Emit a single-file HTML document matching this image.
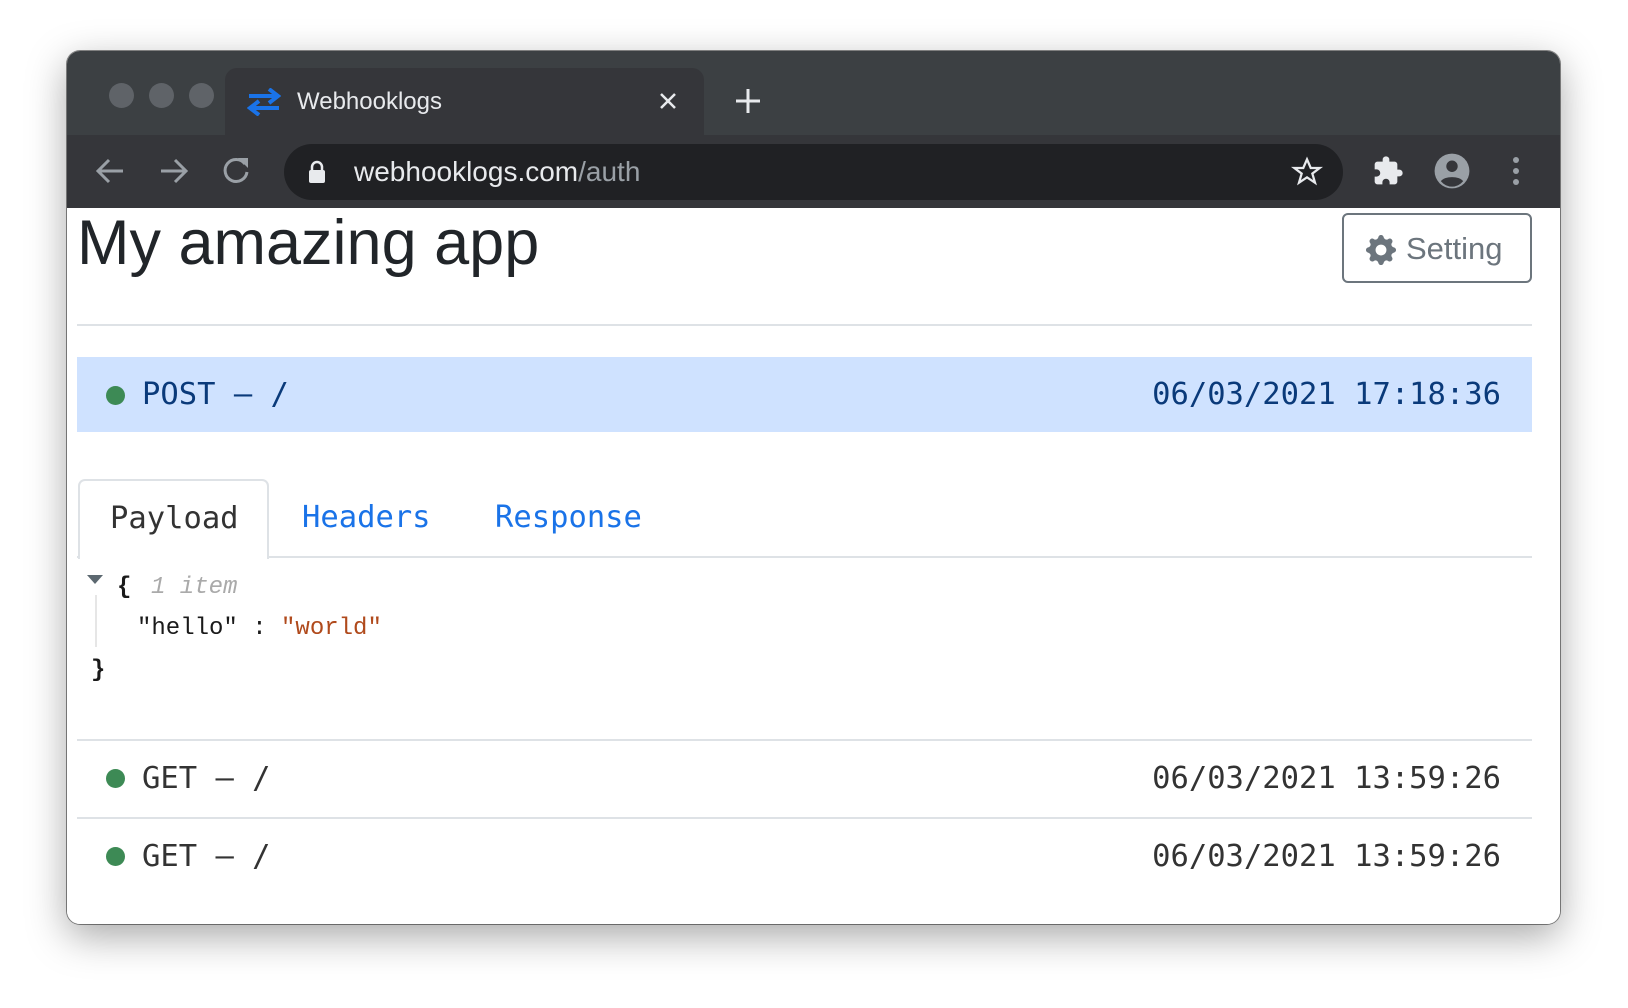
<!DOCTYPE html>
<html><head><meta charset="utf-8"><style>
*{margin:0;padding:0;box-sizing:border-box}
body{width:1628px;height:1008px;background:#fff;position:relative;overflow:hidden;font-family:"Liberation Sans",sans-serif}
.win{position:absolute;left:67px;top:51px;width:1493px;height:873px;border-radius:13px;background:#fff;overflow:hidden;box-shadow:0 12px 40px rgba(0,0,0,.35),0 0 0 1px rgba(0,0,0,.45)}
.tabbar{position:absolute;left:0;top:0;width:100%;height:84px;background:#3c4043}
.dot{position:absolute;top:32px;width:25px;height:25px;border-radius:50%;background:#5f6368}
.tab{position:absolute;left:158px;top:17px;width:479px;height:70px;background:#35363a;border-radius:12px 12px 0 0}
.tab .t{position:absolute;left:72px;top:20px;color:#e8eaed;font-size:24px}
.toolbar{position:absolute;left:0;top:84px;width:100%;height:73px;background:#35363a}
.omni{position:absolute;left:217px;top:9px;width:1059px;height:56px;border-radius:28px;background:#202124}
.omni .u{position:absolute;left:70px;top:12px;font-size:28px;color:#e8eaed}
.mono{font-family:"DejaVu Sans Mono",monospace}
.content{position:absolute;left:0;top:157px;width:100%;bottom:0;background:#fff}
</style></head><body>
<div class="win">
 <div class="tabbar">
  <div class="dot" style="left:42px"></div><div class="dot" style="left:82px"></div><div class="dot" style="left:122px"></div>
  <div class="tab">
   <svg style="position:absolute;left:22px;top:20px" width="34" height="28" viewBox="0 0 34 28"><path d="M2 8H30M22 1L31 8L22 15" stroke="#1a73e8" stroke-width="4" fill="none"/><path d="M32 20H4M12 13L3 20L12 27" stroke="#1a73e8" stroke-width="4" fill="none"/></svg>
   <div class="t">Webhooklogs</div>
   <svg style="position:absolute;left:434px;top:24px" width="18" height="18"><path d="M2 2L16 16M16 2L2 16" stroke="#e8eaed" stroke-width="2.5"/></svg>
  </div>
  <svg style="position:absolute;left:668px;top:37px" width="26" height="26"><path d="M13 1V25M1 13H25" stroke="#e8eaed" stroke-width="3"/></svg>
 </div>
 <div class="toolbar">
  <svg style="position:absolute;left:28px;top:22px" width="30" height="28"><path d="M28 14H3M14 3L3 14L14 25" stroke="#9aa0a6" stroke-width="3" fill="none"/></svg>
  <svg style="position:absolute;left:92px;top:22px" width="30" height="28"><path d="M2 14H27M16 3L27 14L16 25" stroke="#9aa0a6" stroke-width="3" fill="none"/></svg>
  <svg style="position:absolute;left:154px;top:20px" width="30" height="30"><path d="M24 9A11 11 0 1 0 26 17" stroke="#9aa0a6" stroke-width="3" fill="none"/><path d="M17 3H27V13Z" fill="#9aa0a6"/></svg>
  <div class="omni">
   <svg style="position:absolute;left:24px;top:16px" width="18" height="24"><path d="M4 11V7A5 5 0 0 1 14 7V11" stroke="#e8eaed" stroke-width="2.5" fill="none"/><rect x="1" y="10" width="16" height="13" rx="2" fill="#e8eaed"/></svg>
   <div class="u">webhooklogs.com<span style="color:#9aa0a6">/auth</span></div>
   <svg style="position:absolute;left:1007px;top:12px" width="32" height="32" viewBox="0 0 24 24"><path d="M12 2.5L14.8 9H21.5L16 13.2L18 20L12 16L6 20L8 13.2L2.5 9H9.2Z" stroke="#e8eaed" stroke-width="1.7" fill="none"/></svg>
  </div>
  <svg style="position:absolute;left:1305px;top:19px" width="32" height="34" viewBox="0 0 24 24"><path d="M20.5 11H19V7a2 2 0 0 0-2-2h-4V3.5a2.5 2.5 0 0 0-5 0V5H4a2 2 0 0 0-2 2v3.8h1.5a2.7 2.7 0 0 1 0 5.4H2V20a2 2 0 0 0 2 2h3.8v-1.5a2.7 2.7 0 0 1 5.4 0V22H17a2 2 0 0 0 2-2v-4h1.5a2.5 2.5 0 0 0 0-5z" fill="#e8eaed"/></svg>
  <svg style="position:absolute;left:1366px;top:17px" width="38" height="38" viewBox="0 0 24 24"><circle cx="12" cy="12" r="11" fill="#9aa0a6"/><circle cx="12" cy="9" r="3.6" fill="#35363a"/><path d="M5 18.5C7 15 17 15 19 18.5A9 9 0 0 1 5 18.5Z" fill="#35363a"/></svg>
  <div style="position:absolute;left:1446px;top:22px;width:6px">
   <div style="width:6px;height:6px;border-radius:3px;background:#9aa0a6;margin-bottom:5px"></div><div style="width:6px;height:6px;border-radius:3px;background:#9aa0a6;margin-bottom:5px"></div><div style="width:6px;height:6px;border-radius:3px;background:#9aa0a6"></div>
  </div>
 </div>
 <div class="content">
  <div style="position:absolute;left:10px;top:-1px;font-size:63px;color:#212529">My amazing app</div>
  <div style="position:absolute;left:1275px;top:5px;width:190px;height:70px;border:2px solid #6c757d;border-radius:6px;color:#6c757d;font-size:31px">
   <svg style="position:absolute;left:22px;top:20px" width="30" height="30" viewBox="0 0 16 16"><path fill="#6c757d" d="M9.4 1.1c-.4-1.5-2.4-1.5-2.8 0l-.1.3a1.5 1.5 0 0 1-2.1.9l-.3-.2C2.8 1.300 1.300 2.8 2.1 4.1l.2.3a1.5 1.5 0 0 1-.9 2.1l-.3.1c-1.5.4-1.5 2.4 0 2.8l.3.1a1.5 1.5 0 0 1 .9 2.1l-.2.3c-.8 1.3.7 2.8 2 2l.3-.2a1.5 1.5 0 0 1 2.1.9l.1.3c.4 1.5 2.4 1.5 2.8 0l.1-.3a1.5 1.5 0 0 1 2.1-.9l.3.2c1.3.8 2.8-.7 2-2l-.2-.3a1.5 1.5 0 0 1 .9-2.1l.3-.1c1.5-.4 1.5-2.4 0-2.8l-.3-.1a1.5 1.5 0 0 1-.9-2.1l.2-.3c.8-1.3-.7-2.8-2-2l-.3.2a1.5 1.5 0 0 1-2.100-.9zM8 10.9a2.9 2.9 0 1 1 0-5.8 2.9 2.9 0 0 1 0 5.8z"/></svg>
   <span style="position:absolute;left:62px;top:16px">Setting</span>
  </div>
  <div style="position:absolute;left:10px;top:116px;width:1455px;height:2px;background:#dee2e6"></div>
  <div class="mono" style="position:absolute;left:10px;top:149px;width:1455px;height:75px;background:#cfe2ff;color:#0a3a7a;font-size:30.5px">
   <div style="position:absolute;left:29px;top:29px;width:19px;height:19px;border-radius:50%;background:#3d8a55"></div>
   <span style="position:absolute;left:65px;top:20px">POST – /</span>
   <span style="position:absolute;right:31px;top:20px">06/03/2021 17:18:36</span>
  </div>
  <div class="mono" style="position:absolute;left:11px;top:271px;width:191px;height:80px;border:2px solid #dee2e6;border-bottom:none;border-radius:7px 7px 0 0;background:#fff;font-size:30.5px;color:#333;z-index:2"><span style="position:absolute;left:30px;top:20px">Payload</span></div>
  <div class="mono" style="position:absolute;left:235px;top:292px;font-size:30.5px;color:#1a73e8">Headers</div>
  <div class="mono" style="position:absolute;left:428px;top:292px;font-size:30.5px;color:#1a73e8">Response</div>
  <div style="position:absolute;left:10px;top:348px;width:1455px;height:2px;background:#dee2e6"></div>
  <svg style="position:absolute;left:20px;top:367px" width="16" height="12"><path d="M0 0H16L8 9Z" fill="#5c6870"/></svg>
  <div style="position:absolute;left:28px;top:387px;width:2px;height:52px;background:#e6e6e6"></div>
  <div style="position:absolute;left:0;top:0;font-family:'Liberation Mono',monospace;font-size:24px;color:#1a1a1a">
   <div style="position:absolute;left:50px;top:366px;font-weight:bold">{</div>
   <div style="position:absolute;left:84px;top:366px;color:#aaa;font-style:italic;white-space:nowrap">1 item</div>
   <div style="position:absolute;left:70px;top:407px;white-space:nowrap">"hello" : <span style="color:#b04a1c">"world"</span></div>
   <div style="position:absolute;left:24px;top:449px;font-weight:bold">}</div>
  </div>
  <div style="position:absolute;left:10px;top:531px;width:1455px;height:2px;background:#dee2e6"></div>
  <div class="mono" style="position:absolute;left:10px;top:533px;width:1455px;height:76px;color:#333;font-size:30.5px">
   <div style="position:absolute;left:29px;top:28px;width:19px;height:19px;border-radius:50%;background:#3d8a55"></div>
   <span style="position:absolute;left:65px;top:20px">GET – /</span>
   <span style="position:absolute;right:31px;top:20px">06/03/2021 13:59:26</span>
  </div>
  <div style="position:absolute;left:10px;top:609px;width:1455px;height:2px;background:#dee2e6"></div>
  <div class="mono" style="position:absolute;left:10px;top:611px;width:1455px;height:76px;color:#333;font-size:30.5px">
   <div style="position:absolute;left:29px;top:28px;width:19px;height:19px;border-radius:50%;background:#3d8a55"></div>
   <span style="position:absolute;left:65px;top:20px">GET – /</span>
   <span style="position:absolute;right:31px;top:20px">06/03/2021 13:59:26</span>
  </div>
 </div>
</div>
</body></html>
